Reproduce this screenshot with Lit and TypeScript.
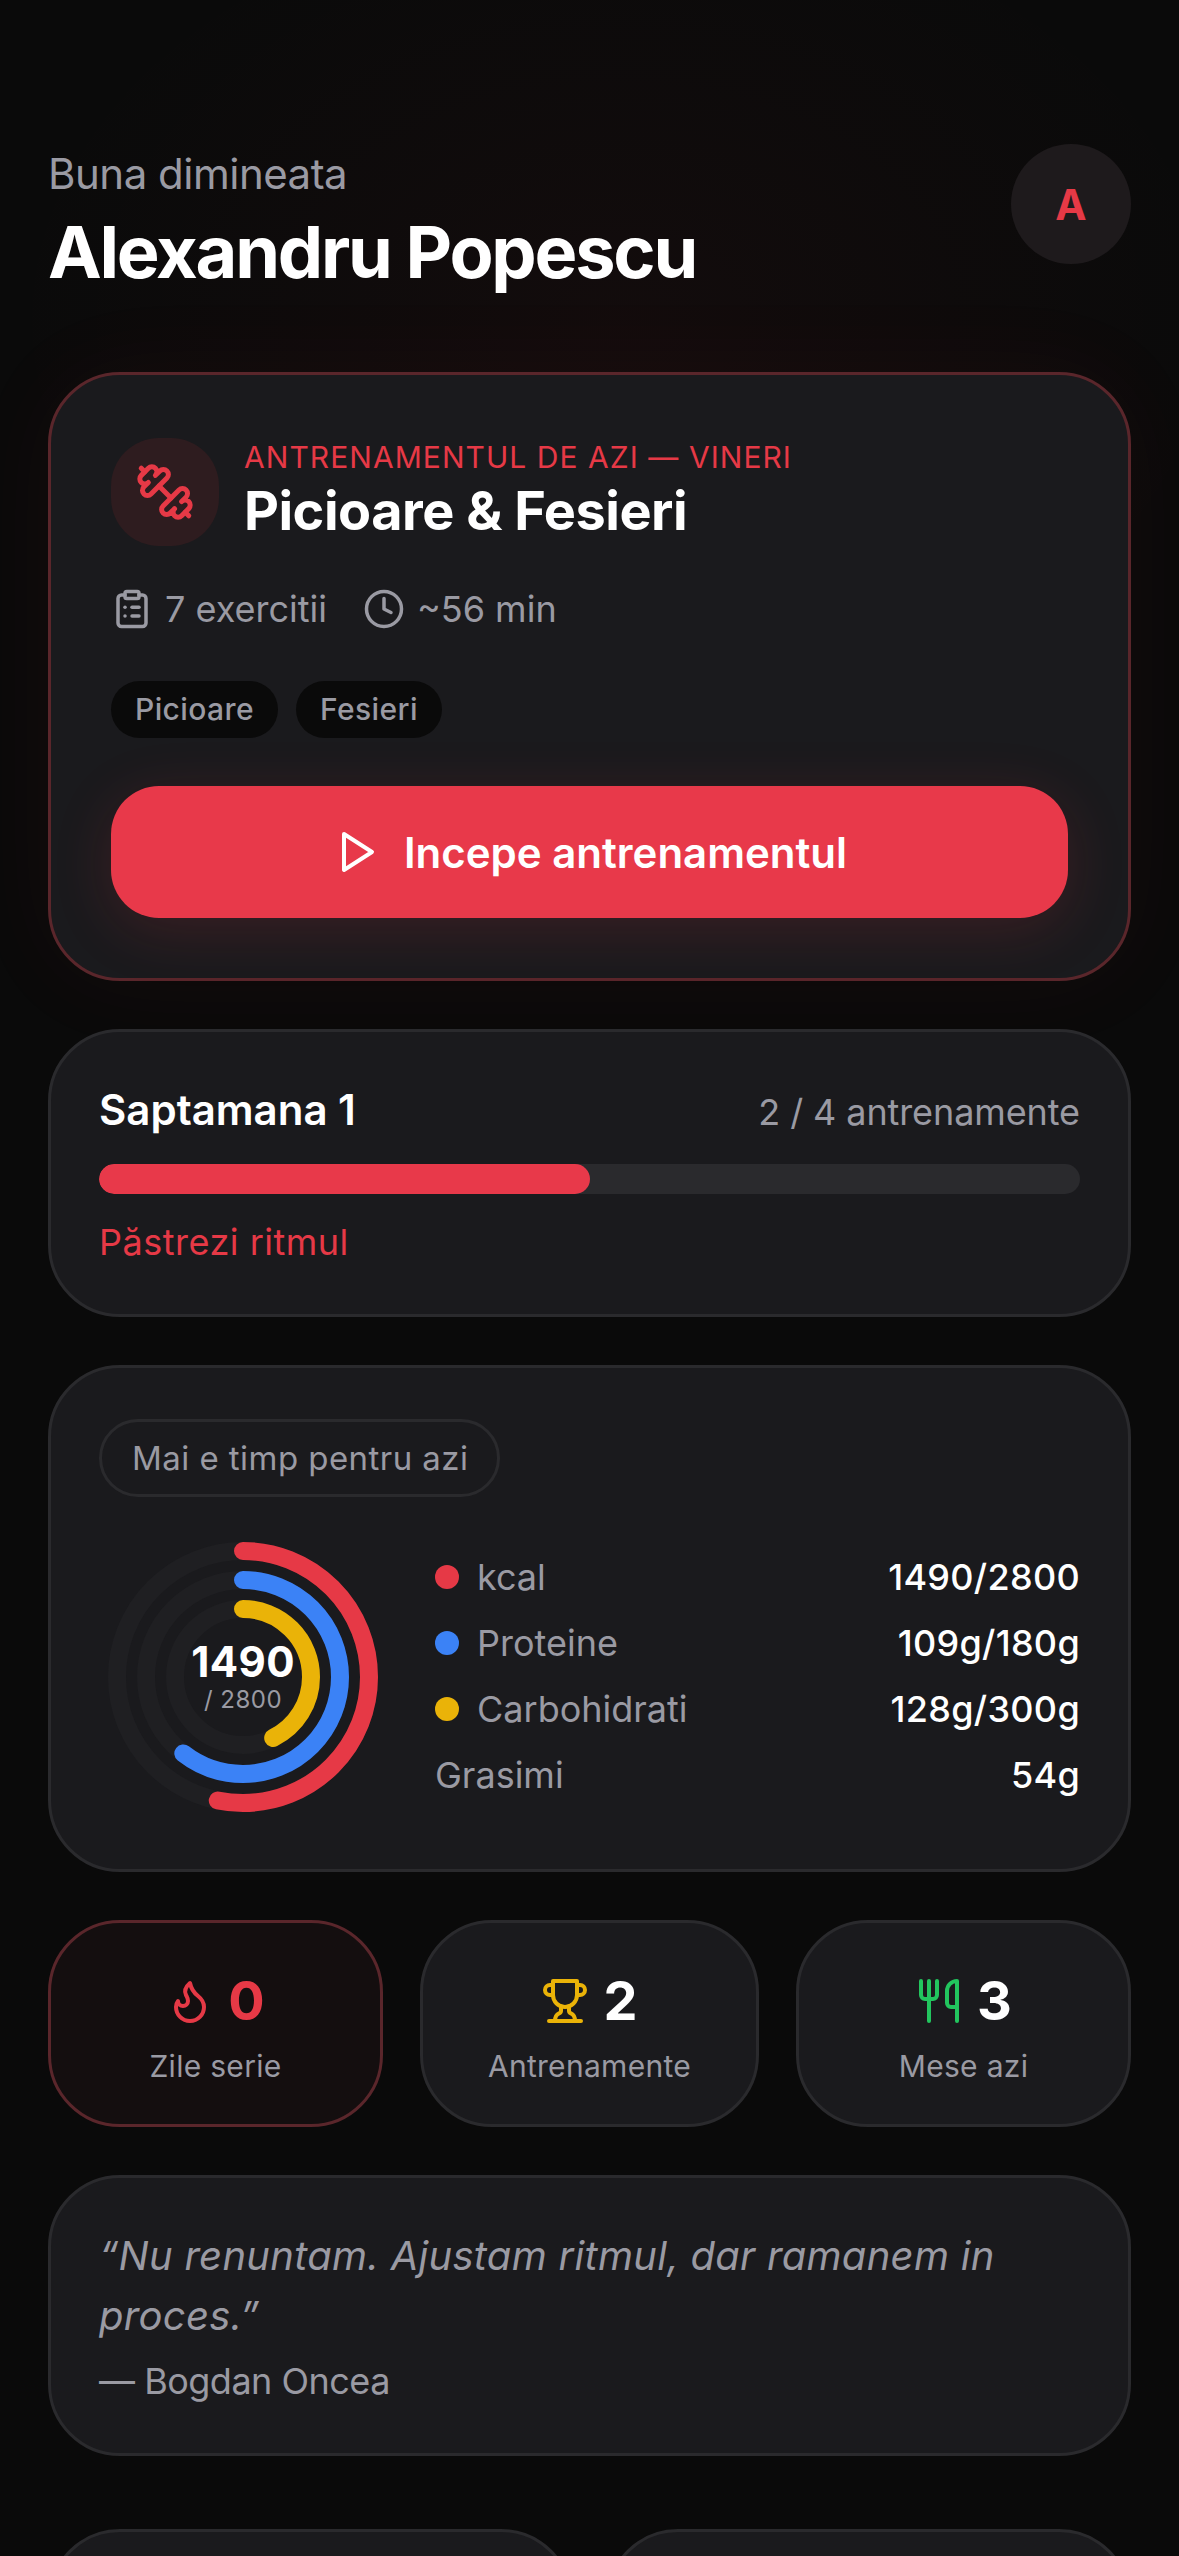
import { LitElement, html, css, svg } from "lit";
import { customElement } from "lit/decorators.js";

const icon = (size: number, body: unknown, extra = "") => html`
  <svg class="ic ${extra}" width=${size} height=${size} viewBox="0 0 24 24" fill="none" stroke="currentColor"
    stroke-width="2" stroke-linecap="round" stroke-linejoin="round">${body}</svg>
`;

const dumbbell = svg`
  <path d="M14.4 14.4 9.6 9.6"/>
  <path d="M18.657 21.485a2 2 0 1 1-2.829-2.828l-1.767 1.768a2 2 0 1 1-2.829-2.829l6.364-6.364a2 2 0 1 1 2.829 2.829l-1.768 1.767a2 2 0 1 1 2.828 2.829z"/>
  <path d="m21.5 21.5-1.4-1.4"/>
  <path d="M3.9 3.9 2.5 2.5"/>
  <path d="M6.404 12.768a2 2 0 1 1-2.829-2.829l1.768-1.767a2 2 0 1 1-2.828-2.829l2.828-2.828a2 2 0 1 1 2.829 2.828l1.767-1.768a2 2 0 1 1 2.829 2.829z"/>`;
const clipboard = svg`
  <rect width="8" height="4" x="8" y="2" rx="1" ry="1"/>
  <path d="M16 4h2a2 2 0 0 1 2 2v14a2 2 0 0 1-2 2H6a2 2 0 0 1-2-2V6a2 2 0 0 1 2-2h2"/>
  <path d="M12 11h4"/><path d="M12 16h4"/><path d="M8 11h.01"/><path d="M8 16h.01"/>`;
const clock = svg`<circle cx="12" cy="12" r="10"/><polyline points="12 6 12 12 16 14"/>`;
const play = svg`<polygon points="6 3 20 12 6 21 6 3"/>`;
const flame = svg`<path d="M8.5 14.5A2.5 2.5 0 0 0 11 12c0-1.38-.5-2-1-3-1.072-2.143-.224-4.054 2-6 .5 2.5 2 4.9 4 6.5 2 1.6 3 3.5 3 5.5a7 7 0 1 1-14 0c0-1.153.433-2.294 1-3a2.5 2.5 0 0 0 2.5 2.5z"/>`;
const trophy = svg`
  <path d="M6 9H4.5a2.5 2.5 0 0 1 0-5H6"/><path d="M18 9h1.5a2.5 2.5 0 0 0 0-5H18"/><path d="M4 22h16"/>
  <path d="M10 14.66V17c0 .55-.47.98-.97 1.21C7.85 18.75 7 20.24 7 22"/>
  <path d="M14 14.66V17c0 .55.47.98.97 1.21C16.15 18.75 17 20.24 17 22"/>
  <path d="M18 2H6v7a6 6 0 0 0 12 0V2Z"/>`;
const utensils = svg`
  <path d="M3 2v7c0 1.1.9 2 2 2h4a2 2 0 0 0 2-2V2"/><path d="M7 2v20"/>
  <path d="M21 15V2a5 5 0 0 0-5 5v6c0 1.1.9 2 2 2h3Zm0 0v7"/>`;

const rings = [
  { r: 126, pct: 1490 / 2800, color: "#e63946" },
  { r: 97, pct: 109 / 180, color: "#3b82f6" },
  { r: 68, pct: 128 / 300, color: "#eab308" },
];

const macros = [
  { label: "kcal", value: "1490/2800", color: "#e63946" },
  { label: "Proteine", value: "109g/180g", color: "#3b82f6" },
  { label: "Carbohidrati", value: "128g/300g", color: "#eab308" },
  { label: "Grasimi", value: "54g", color: "" },
];

@customElement("app-root")
export class AppRoot extends LitElement {
  static styles = css`
    :host {
      display: block;
      height: 2556px;
      overflow: hidden;
      background:
        radial-gradient(ellipse 620px 440px at 620px 320px, rgba(230, 57, 70, 0.04), transparent 100%),
        #0a0a0a;
      font-family: Inter, "Noto Sans", sans-serif;
      color: #fff;
    }
    .page {
      display: flex;
      flex-direction: column;
      gap: 48px;
      padding: 144px 48px 0;
    }
    .ic {
      display: block;
      flex: none;
    }
    .muted {
      color: #9a9aa3;
    }

    header {
      display: flex;
      justify-content: space-between;
      align-items: flex-start;
      height: 180px;
    }
    .hello {
      font-size: 42px;
      line-height: 50px;
      margin-top: 5px;
      letter-spacing: -0.5px;
      color: #9a9aa3;
    }
    .name {
      font-size: 72px;
      line-height: 84px;
      font-weight: 700;
      letter-spacing: -2.2px;
      margin-top: 11px;
    }
    .avatar {
      width: 120px;
      height: 120px;
      border-radius: 50%;
      background: #1e1a1c;
      color: #e63946;
      display: flex;
      align-items: center;
      justify-content: center;
      font-size: 42px;
      font-weight: 700;
    }

    .card {
      background: #1a1a1d;
      border: 3px solid #2a2a2d;
      border-radius: 72px;
    }
    .hero {
      border-color: #5a262b;
      padding: 63px 60px 60px;
      box-shadow: 0 0 96px rgba(230, 57, 70, 0.05);
    }
    .hero-top {
      display: flex;
      align-items: center;
      gap: 25px;
    }
    .hero-text {
      padding-bottom: 4px;
    }
    .tile {
      width: 108px;
      height: 108px;
      border-radius: 48px;
      background: #2e1c1f;
      color: #e63946;
      display: flex;
      align-items: center;
      justify-content: center;
      flex: none;
    }
    .eyebrow {
      font-size: 30px;
      line-height: 36px;
      font-weight: 400;
      letter-spacing: 1.05px;
      margin-bottom: 6px;
      color: #e63946;
    }
    .title {
      font-size: 54px;
      line-height: 60px;
      font-weight: 700;
      letter-spacing: -0.5px;
    }
    .meta {
      display: flex;
      align-items: center;
      gap: 36px;
      margin-top: 42px;
      font-size: 36px;
      line-height: 42px;
      color: #9a9aa3;
    }
    .meta span {
      display: flex;
      align-items: center;
      gap: 12px;
    }
    .tags {
      display: flex;
      gap: 18px;
      margin-top: 51px;
    }
    .tag {
      height: 57px;
      line-height: 57px;
      padding: 0 24px;
      border-radius: 29px;
      background: #0a0a0a;
      font-size: 30px;
      font-weight: 500;
      letter-spacing: 0.4px;
      color: #9a9aa3;
    }
    .start {
      height: 132px;
      margin-top: 48px;
      border-radius: 48px;
      background: #e8394a;
      box-shadow: 0 12px 60px rgba(230, 57, 70, 0.16);
      display: flex;
      align-items: center;
      justify-content: center;
      gap: 24px;
      font-size: 42px;
      font-weight: 600;
    }

    .week {
      padding: 54px 48px 0;
      height: 288px;
      box-sizing: border-box;
    }
    .week-top {
      display: flex;
      justify-content: space-between;
      align-items: baseline;
      line-height: 48px;
    }
    .week-title {
      font-size: 42px;
      font-weight: 600;
    }
    .week-count {
      font-size: 36px;
      letter-spacing: -0.1px;
    }
    .track {
      height: 30px;
      margin-top: 28px;
      border-radius: 15px;
      background: #2a2a2d;
      overflow: hidden;
    }
    .fill {
      height: 100%;
      border-radius: 15px;
      background: #e8394a;
    }
    .keep {
      margin-top: 26px;
      font-size: 36px;
      line-height: 44px;
      font-weight: 400;
      letter-spacing: 0.5px;
      color: #e63946;
    }

    .nutrition {
      padding: 51px 48px 48px;
    }
    .pill {
      display: inline-block;
      height: 78px;
      line-height: 72px;
      box-sizing: border-box;
      padding: 0 29px 0 30px;
      border: 3px solid #2a2a2d;
      border-radius: 39px;
      font-size: 33px;
      letter-spacing: 0.45px;
      color: #9a9aa3;
    }
    .nutri-row {
      display: flex;
      align-items: center;
      gap: 48px;
      margin-top: 36px;
    }
    .ring {
      position: relative;
      width: 288px;
      height: 288px;
      flex: none;
    }
    .ring svg {
      display: block;
    }
    .ring-label {
      position: absolute;
      inset: 0;
      display: flex;
      flex-direction: column;
      align-items: center;
      justify-content: center;
    }
    .ring-value {
      font-size: 42px;
      line-height: 46px;
      font-weight: 700;
      letter-spacing: 0.4px;
    }
    .ring-total {
      font-size: 24px;
      line-height: 30px;
      letter-spacing: 0.5px;
      color: #9a9aa3;
    }
    .macros {
      flex: 1;
      display: flex;
      flex-direction: column;
      gap: 22px;
      padding-bottom: 3px;
    }
    .macro {
      display: flex;
      align-items: center;
      height: 44px;
      font-size: 36px;
    }
    .dot {
      width: 24px;
      height: 24px;
      border-radius: 50%;
      margin-right: 18px;
    }
    .macro-value {
      margin-left: auto;
      font-weight: 500;
      letter-spacing: 0.3px;
    }

    .stats {
      display: grid;
      grid-template-columns: 335fr 339fr 335fr;
      gap: 37px;
    }
    .stat {
      height: 207px;
      box-sizing: border-box;
      display: flex;
      flex-direction: column;
      align-items: center;
      padding-top: 48px;
    }
    .stat.hot {
      background: #140e0f;
      border-color: #5a262b;
    }
    .stat-top {
      display: flex;
      align-items: center;
      gap: 14px;
      font-size: 54px;
      line-height: 60px;
      font-weight: 700;
    }
    .stat-label {
      margin-top: 17px;
      font-size: 30px;
      line-height: 36px;
      letter-spacing: 0.3px;
      color: #9a9aa3;
    }

    .quote {
      padding: 48px 48px 50px;
    }
    .quote-text {
      font-size: 40px;
      line-height: 60px;
      font-style: italic;
      letter-spacing: 0.28px;
      color: #9a9aa3;
    }
    .quote-author {
      margin-top: 13px;
      font-size: 36px;
      line-height: 44px;
      letter-spacing: -0.5px;
      color: #9a9aa3;
    }

    .bottom {
      display: grid;
      grid-template-columns: 1fr 1fr;
      gap: 33px;
      margin-top: 25px;
    }
    .bottom .card {
      height: 240px;
    }
  `;

  render() {
    return html`
      <div class="page">
        <header>
          <div>
            <div class="hello">Buna dimineata</div>
            <div class="name">Alexandru Popescu</div>
          </div>
          <div class="avatar">A</div>
        </header>

        <section class="card hero">
          <div class="hero-top">
            <div class="tile">${icon(60, dumbbell)}</div>
            <div class="hero-text">
              <div class="eyebrow">ANTRENAMENTUL DE AZI — VINERI</div>
              <div class="title">Picioare &amp; Fesieri</div>
            </div>
          </div>
          <div class="meta">
            <span>${icon(42, clipboard)}7 exercitii</span>
            <span>${icon(42, clock)}~56 min</span>
          </div>
          <div class="tags">
            <div class="tag">Picioare</div>
            <div class="tag">Fesieri</div>
          </div>
          <div class="start">${icon(48, play)}Incepe antrenamentul</div>
        </section>

        <section class="card week">
          <div class="week-top">
            <div class="week-title">Saptamana 1</div>
            <div class="week-count muted">2 / 4 antrenamente</div>
          </div>
          <div class="track"><div class="fill" style="width:50%"></div></div>
          <div class="keep">Păstrezi ritmul</div>
        </section>

        <section class="card nutrition">
          <div class="pill">Mai e timp pentru azi</div>
          <div class="nutri-row">
            <div class="ring">
              <svg width="288" height="288" viewBox="0 0 288 288" fill="none">
                ${rings.map(
                  (r) => svg`
                    <circle cx="144" cy="144" r=${r.r} stroke="#1f1f22" stroke-width="18" />
                    <circle cx="144" cy="144" r=${r.r} stroke=${r.color} stroke-width="18" stroke-linecap="round"
                      pathLength="100" stroke-dasharray="${r.pct * 100} 100" transform="rotate(-90 144 144)" />
                  `
                )}
              </svg>
              <div class="ring-label">
                <div class="ring-value">1490</div>
                <div class="ring-total">/ 2800</div>
              </div>
            </div>
            <div class="macros">
              ${macros.map(
                (m) => html`
                  <div class="macro">
                    ${m.color ? html`<div class="dot" style="background:${m.color}"></div>` : ""}
                    <span class="muted">${m.label}</span>
                    <span class="macro-value">${m.value}</span>
                  </div>
                `
              )}
            </div>
          </div>
        </section>

        <section class="stats">
          <div class="card stat hot">
            <div class="stat-top" style="color:#e63946">${icon(48, flame)}<span>0</span></div>
            <div class="stat-label">Zile serie</div>
          </div>
          <div class="card stat">
            <div class="stat-top"><span style="color:#eab308">${icon(48, trophy)}</span><span>2</span></div>
            <div class="stat-label">Antrenamente</div>
          </div>
          <div class="card stat">
            <div class="stat-top"><span style="color:#22c55e">${icon(48, utensils)}</span><span>3</span></div>
            <div class="stat-label">Mese azi</div>
          </div>
        </section>

        <section class="card quote">
          <div class="quote-text">“Nu renuntam. Ajustam ritmul, dar ramanem in proces.”</div>
          <div class="quote-author">— Bogdan Oncea</div>
        </section>

        <section class="bottom">
          <div class="card"></div>
          <div class="card"></div>
        </section>
      </div>
    `;
  }
}
